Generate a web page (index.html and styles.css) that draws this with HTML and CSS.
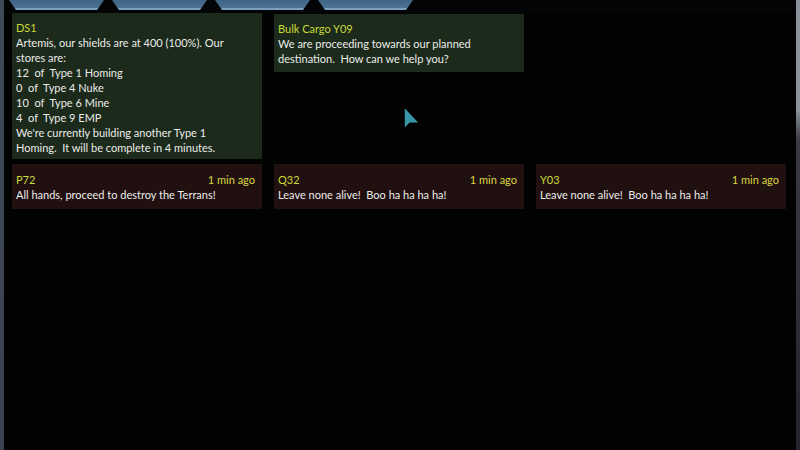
FILE: index.html
```
<!DOCTYPE html>
<html>
<head>
<meta charset="utf-8">
<link rel="stylesheet" href="styles.css">
</head>
<body>
<div class="frame">
  <div class="tabs">
    <div class="tab"></div>
    <div class="tab"></div>
    <div class="tab"></div>
    <div class="tab"></div>
  </div>
  <div class="grid">
    <div class="card ok tall">
      <div class="title">DS1</div>
      <div class="body">Artemis, our shields are at 400 (100%). Our<br>stores are:<br>12&nbsp; of&nbsp; Type 1 Homing<br>0&nbsp; of&nbsp; Type 4 Nuke<br>10&nbsp; of&nbsp; Type 6 Mine<br>4&nbsp; of&nbsp; Type 9 EMP<br>We're currently building another Type 1<br>Homing.&nbsp; It will be complete in 4 minutes.</div>
    </div>
    <div class="card ok short">
      <div class="title">Bulk Cargo Y09</div>
      <div class="body">We are proceeding towards our planned<br>destination.&nbsp; How can we help you?</div>
    </div>
    <div class="spacer"></div>
    <div class="card bad">
      <div class="head"><span class="title">P72</span><span class="time">1 min ago</span></div>
      <div class="body">All hands, proceed to destroy the Terrans!</div>
    </div>
    <div class="card bad">
      <div class="head"><span class="title">Q32</span><span class="time">1 min ago</span></div>
      <div class="body">Leave none alive!&nbsp; Boo ha ha ha ha!</div>
    </div>
    <div class="card bad">
      <div class="head"><span class="title">Y03</span><span class="time">1 min ago</span></div>
      <div class="body">Leave none alive!&nbsp; Boo ha ha ha ha!</div>
    </div>
  </div>
  <svg class="cursor" width="18" height="24" viewBox="0 0 14 20"><path d="M1 1 L1 17 L5 13 L12 13 Z" fill="#3a97a8"/></svg>
</div>
</body>
</html>
```

FILE: styles.css
```
html, body {
  margin: 0;
  padding: 0;
  background: #000;
}
.frame {
  position: relative;
  width: 800px;
  height: 450px;
  box-sizing: border-box;
  padding-left: 4px;
  padding-right: 4px;
  background-color: #020203;
  background-image:
    linear-gradient(to bottom, #3e4a57, #3a4450),
    linear-gradient(to bottom, #8a929c 0, #8a929c 110px, #3a3a46 140px, #24222c 100%);
  background-size: 4px 100%, 4px 100%;
  background-position: left top, right top;
  background-repeat: no-repeat;
  font-family: "Lato", "Open Sans", sans-serif;
  font-size: 11px;
  line-height: 15px;
  color: #ececea;
  overflow: hidden;
}
.tabs {
  display: flex;
  gap: 8px;
  height: 13px;
  padding-left: 5px;
  background: #030405;
}
.tab {
  width: 95px;
  height: 10px;
  background: linear-gradient(#3f6384, #4d7497);
  border-bottom: 2px solid #7a9fbf;
  box-sizing: border-box;
  clip-path: polygon(0 0, 100% 0, calc(100% - 7px) 100%, 7px 100%);
}
.grid {
  display: grid;
  grid-template-columns: repeat(3, 250px);
  column-gap: 12px;
  row-gap: 5px;
  padding-left: 8px;
  align-items: start;
}
.card {
  padding: 7px 4px 6px 4px;
}
.ok {
  background: #1b2a1a;
}
.tall {
  padding-bottom: 4px;
}
.short {
  margin-top: 1px;
  padding-bottom: 6px;
}
.bad {
  background: #20100f;
  padding: 8px 7px 7px 4px;
}
.title {
  color: #cbd838;
}
.head {
  display: flex;
  justify-content: space-between;
}
.time {
  color: #dcd444;
}
.cursor {
  position: absolute;
  left: 403px;
  top: 107px;
}
```
